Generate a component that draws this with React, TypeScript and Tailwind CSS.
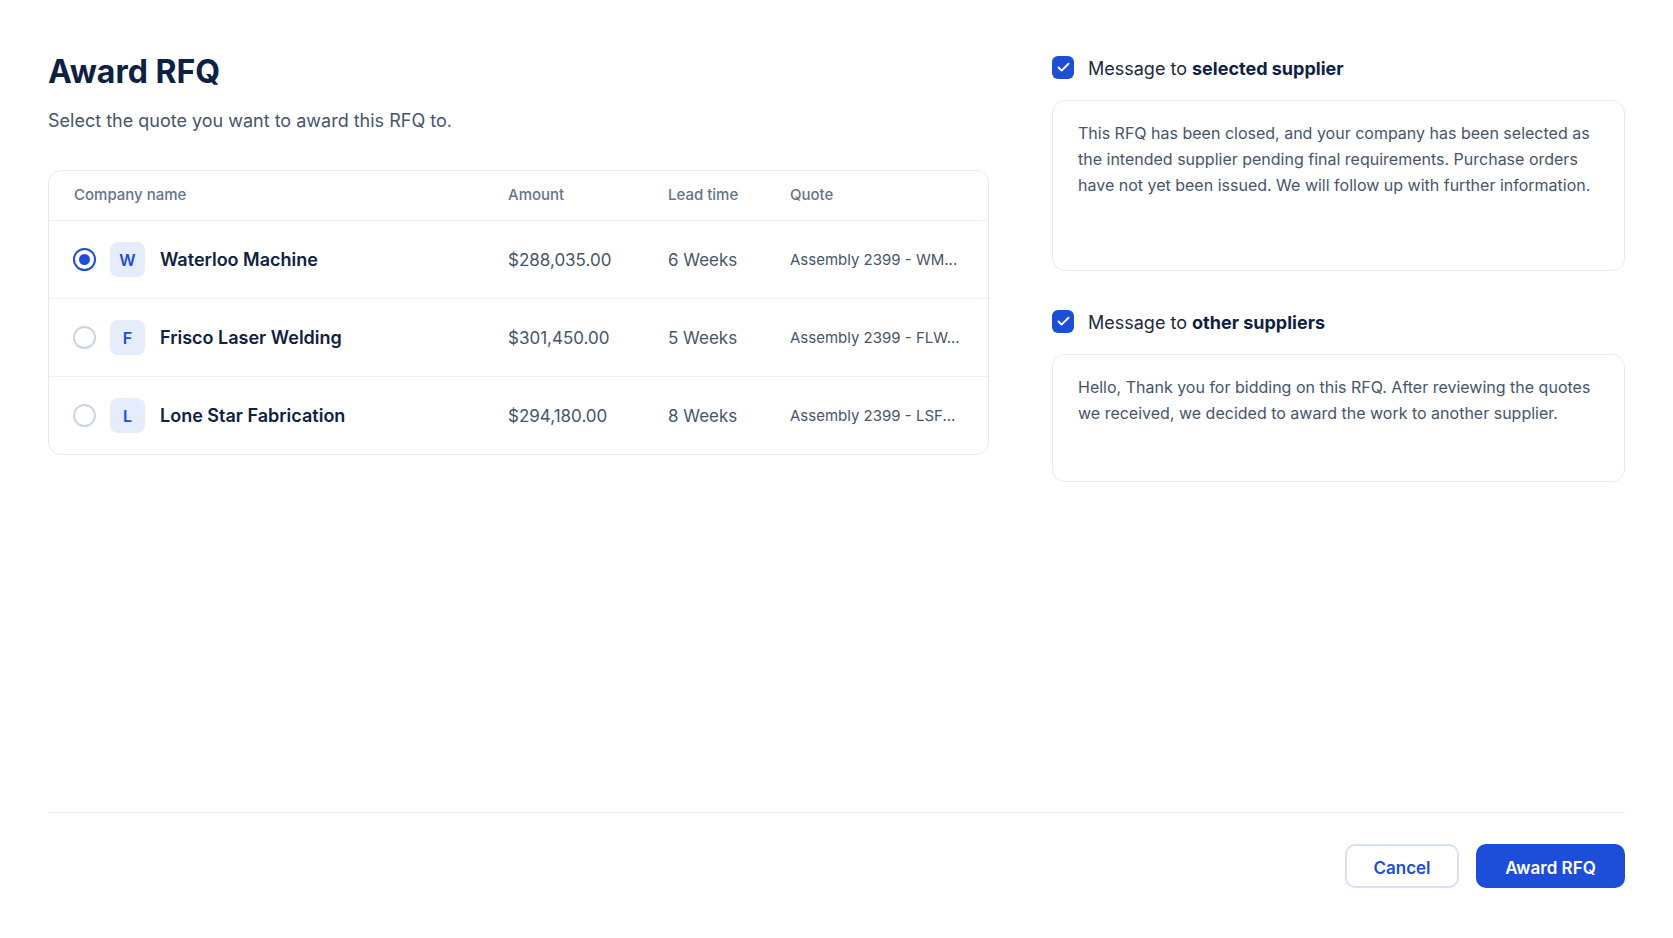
import { Check } from "lucide-react";

const quotes = [
  { letter: "W", name: "Waterloo Machine", amount: "$288,035.00", lead: "6 Weeks", file: "Assembly 2399 - WM...", selected: true },
  { letter: "F", name: "Frisco Laser Welding", amount: "$301,450.00", lead: "5 Weeks", file: "Assembly 2399 - FLW...", selected: false },
  { letter: "L", name: "Lone Star Fabrication", amount: "$294,180.00", lead: "8 Weeks", file: "Assembly 2399 - LSF...", selected: false },
];

const gridCols = "grid grid-cols-[434px_160px_122px_1fr] items-center pl-[25px]";

function Radio({ on }: { on: boolean }) {
  return on ? (
    <span className="-ml-px flex h-[23px] w-[23px] shrink-0 items-center justify-center rounded-full border-2 border-[#1d4ed8]">
      <span className="h-[11px] w-[11px] rounded-full bg-[#1d4ed8]" />
    </span>
  ) : (
    <span className="-ml-px h-[23px] w-[23px] shrink-0 rounded-full border-2 border-[#cbd5e1]" />
  );
}

function MessageLabel({ bold }: { bold: string }) {
  return (
    <div className="flex h-[23px] items-center gap-[14px]">
      <span className="flex h-[23px] w-[22px] items-center justify-center rounded-[6px] bg-[#1d4ed8] text-white">
        <Check size={15} strokeWidth={3} />
      </span>
      <span className="pt-[3px] text-[18px] leading-[26px] text-[#1e293b]">
        Message to <b className="font-bold text-[#0f2142]">{bold}</b>
      </span>
    </div>
  );
}

export default function App() {
  return (
    <div className="flex h-[938px] flex-col bg-white px-12 font-['Inter',sans-serif]">
      <main className="flex flex-1 gap-[63px]">
        <section className="w-[941px] pt-[49px]">
          <h1 className="text-[32px] leading-[46px] font-bold text-[#0f2142]">Award RFQ</h1>
          <p className="mt-[12px] text-[18px] leading-[28px] text-[#475569]">
            Select the quote you want to award this RFQ to.
          </p>

          <div className="mt-[35px] rounded-[13px] border border-[#e6ebf3]">
            <div className={`${gridCols} h-[50px] border-b border-[#edf1f7] text-[15px] font-medium text-[#64748b]`}>
              <span>Company name</span>
              <span>Amount</span>
              <span>Lead time</span>
              <span>Quote</span>
            </div>
            {quotes.map((q, i) => (
              <div
                key={q.letter}
                className={`${gridCols} ${i < quotes.length - 1 ? "h-[78px] border-b border-[#edf1f7]" : "h-[77px]"}`}
              >
                <div className="flex items-center">
                  <Radio on={q.selected} />
                  <span className="ml-[14px] flex h-[35px] w-[35px] items-center justify-center rounded-[8px] bg-[#e5ecfc] text-[16px] font-semibold text-[#1d4ed8]">
                    {q.letter}
                  </span>
                  <span className="ml-[15px] text-[18px] font-semibold text-[#0f2142]">{q.name}</span>
                </div>
                <span className="pt-[3px] text-[17px] text-[#475569]">{q.amount}</span>
                <span className="pt-[3px] text-[17px] text-[#475569]">{q.lead}</span>
                <span className="pt-px text-[15px] text-[#475569]">{q.file}</span>
              </div>
            ))}
          </div>
        </section>

        <section className="flex-1 pt-[56px]">
          <MessageLabel bold="selected supplier" />
          <div className="mt-[21px] h-[171px] rounded-[13px] border border-[#e6ebf3] py-[19px] pr-[24px] pl-[25px] text-[16px] leading-[26px] text-[#475569]">
            This RFQ has been closed, and your company has been selected as the intended supplier pending final
            requirements. Purchase orders have not yet been issued. We will follow up with further information.
          </div>

          <div className="mt-[39px]">
            <MessageLabel bold="other suppliers" />
          </div>
          <div className="mt-[21px] h-[128px] rounded-[13px] border border-[#e6ebf3] py-[19px] pr-[24px] pl-[25px] text-[16px] leading-[26px] text-[#475569]">
            Hello, Thank you for bidding on this RFQ. After reviewing the quotes we received, we decided to award the
            work to another supplier.
          </div>
        </section>
      </main>

      <footer className="flex h-[126px] shrink-0 justify-end gap-[17px] border-t border-[#e6ebf3] pt-[31px]">
        <button className="h-[44px] w-[114px] rounded-[10px] border-2 border-[#d8e2f5] pt-[5px] text-[17px] font-semibold text-[#1d4ed8]">
          Cancel
        </button>
        <button className="h-[44px] w-[149px] rounded-[10px] bg-[#1d4ed8] pt-[5px] text-[17px] font-semibold text-white">
          Award RFQ
        </button>
      </footer>
    </div>
  );
}
